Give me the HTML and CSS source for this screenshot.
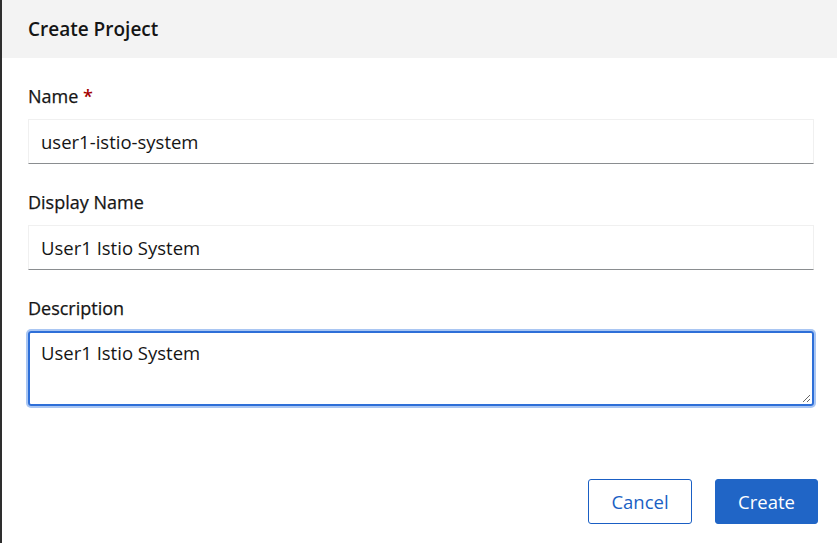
FILE: index.html
```html
<!DOCTYPE html>
<html>
<head>
<meta charset="utf-8">
<link rel="stylesheet" href="styles.css">
</head>
<body>
<div class="backdrop">
  <div class="modal">
    <div class="modal-header">
      <h1 class="modal-title">Create Project</h1>
    </div>
    <form class="modal-body">
      <div class="field">
        <label class="label">Name <span class="req">*</span></label>
        <div class="input">user1-istio-system</div>
      </div>
      <div class="field">
        <label class="label">Display Name</label>
        <div class="input">User1 Istio System</div>
      </div>
      <div class="field">
        <label class="label">Description</label>
        <div class="textarea">User1 Istio System
          <svg class="grip" width="10" height="10" viewBox="0 0 10 10"><path d="M9 2 L2 9 M9 6 L6 9" stroke="#666" stroke-width="1"/></svg>
        </div>
      </div>
    </form>
    <div class="modal-footer">
      <button class="btn btn-secondary" type="button">Cancel</button>
      <button class="btn btn-primary" type="button">Create</button>
    </div>
  </div>
</div>
</body>
</html>
```
FILE: styles.css
```css
html, body {
  margin: 0;
  padding: 0;
  background: #fff;
}
body {
  font-family: "Open Sans", "Noto Sans", sans-serif;
  color: #151515;
}
.backdrop {
  border-left: 2px solid #2e2e2e;
  height: 543px;
  box-sizing: border-box;
}
.modal {
  display: flex;
  flex-direction: column;
  height: 100%;
}
.modal-header {
  background: #f3f3f3;
  height: 58px;
  display: flex;
  align-items: center;
  padding-left: 26px;
}
.modal-title {
  margin: 0;
  font-size: 19px;
  font-weight: 600;
  color: #151515;
}
.modal-body {
  padding: 26px 23px 0 26px;
  margin: 0;
  display: flex;
  flex-direction: column;
  gap: 26px;
}
.field {
  display: flex;
  flex-direction: column;
}
.label {
  font-size: 18px;
  font-weight: 500;
  line-height: 24px;
  margin-bottom: 11px;
  -webkit-text-stroke: 0.25px #151515;
}
.req {
  color: #a30000;
  font-weight: 600;
  -webkit-text-stroke: 0;
}
.input {
  height: 45px;
  box-sizing: border-box;
  border: 1px solid #f0f0f0;
  border-bottom: 1px solid #8a8d90;
  padding: 0 12px;
  display: flex;
  align-items: center;
  font-size: 18.5px;
}
.textarea {
  position: relative;
  height: 75px;
  box-sizing: border-box;
  border: 2px solid #2e6fd8;
  border-radius: 3px;
  box-shadow: 0 0 0 2px #a9c6f3;
  padding: 8px 11px;
  font-size: 18.5px;
  line-height: 24px;
}
.grip {
  position: absolute;
  right: 1px;
  bottom: 1px;
}
.modal-footer {
  margin-top: auto;
  display: flex;
  justify-content: flex-end;
  gap: 23px;
  padding: 0 19px 19px 0;
}
.btn {
  height: 45px;
  box-sizing: border-box;
  border-radius: 3px;
  font-family: inherit;
  font-size: 18.5px;
  font-weight: 500;
  padding: 0;
  cursor: pointer;
}
.btn-secondary {
  width: 104px;
  background: #fff;
  color: #1a5fc4;
  border: 1px solid #1a5fc4;
}
.btn-primary {
  width: 103px;
  background: #2065c6;
  color: #fff;
  border: 1px solid #2065c6;
}
```
